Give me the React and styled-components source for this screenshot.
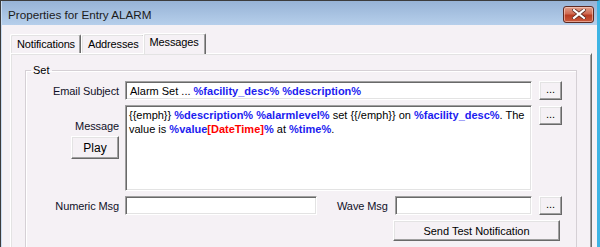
import React from 'react';
import styled, { createGlobalStyle } from 'styled-components';

const Global = createGlobalStyle`
  * { box-sizing: border-box; }
  html, body { margin: 0; padding: 0; background: #f5f1f5; }
  body { font-family: "Liberation Sans", Arial, sans-serif; font-size: 11px; color: #000; }
`;

const App = () => {
  return (
    <>
      <Global />
      <Window>
        <TitleBar>
          <Title>Properties for Entry ALARM</Title>
          <CloseButton>
            <svg width="14" height="10" viewBox="0 0 14 10">
              <path d="M2 1 L12 9 M12 1 L2 9" stroke="#5a2a20" strokeWidth="3.6" strokeLinecap="square" />
              <path d="M2 1 L12 9 M12 1 L2 9" stroke="#fff" strokeWidth="2.2" strokeLinecap="square" />
            </svg>
          </CloseButton>
        </TitleBar>
        <Body>
          <TabStrip>
            <Tab>Notifications</Tab>
            <Tab>Addresses</Tab>
            <Tab active>Messages</Tab>
          </TabStrip>
          <TabPanel>
            <GroupBox>
              <Legend>Set</Legend>
              <FormGrid>
                <Label>Email Subject</Label>
                <Field>
                  Alarm Set ... <Var>%facility_desc%</Var> <Var>%description%</Var>
                </Field>
                <Button small>...</Button>

                <MessageSide>
                  <Label>Message</Label>
                  <Button play>Play</Button>
                </MessageSide>
                <TextArea>
                  {'{{emph}} '}<Var>%description%</Var> <Var>%alarmlevel%</Var>{' set {{/emph}} on '}
                  <Var>%facility_desc%</Var>. The
                  <br />
                  value is <Var>%value</Var><Red>[DateTime]</Red><Var>%</Var> at <Var>%time%</Var>.
                </TextArea>
                <Button small top>...</Button>

                <Label>Numeric Msg</Label>
                <SplitRow>
                  <Field w={192} />
                  <WaveLabel>Wave Msg</WaveLabel>
                  <Field w={137} />
                </SplitRow>
                <Button small>...</Button>

                <span />
                <SendCell>
                  <Button wide>Send Test Notification</Button>
                </SendCell>
              </FormGrid>
            </GroupBox>
          </TabPanel>
        </Body>
      </Window>
    </>
  );
};

export default App;

const Window = styled.div`
  width: 600px;
  height: 247px;
  overflow: hidden;
  background: #f5f1f5;
  border-top: 1px solid #3c3c3c;
  border-left: 1px solid #3c3c3c;
  border-right: 3px solid #3eb4e4;
  display: flex;
  flex-direction: column;
`;

const TitleBar = styled.div`
  height: 24px;
  flex: none;
  display: flex;
  align-items: center;
  justify-content: space-between;
  padding: 0 2px 0 6px;
  background: linear-gradient(#97b3d6, #b6cfeb);
  border-left: 1px solid #c9dcf2;
`;

const Title = styled.div`
  font-size: 11.7px;
  color: #1b1b1b;
  padding-top: 3px;
`;

const CloseButton = styled.div`
  width: 31px;
  height: 17px;
  margin-top: 2px;
  margin-right: 1px;
  border: 1px solid #5e2a22;
  border-radius: 3px;
  background: linear-gradient(#e0a08c 0%, #cf6a52 45%, #b83c22 55%, #c95a3c 100%);
  box-shadow: inset 0 0 0 1px rgba(255, 220, 210, 0.55);
  display: flex;
  align-items: center;
  justify-content: center;
`;

const Body = styled.div`
  flex: 1;
  padding: 7px 6px 0 8px;
  border-left: 1px solid #c9dcf2;
`;

const TabStrip = styled.div`
  display: flex;
  align-items: flex-end;
  height: 21px;
  position: relative;
  z-index: 1;
`;

const Tab = styled.div`
  height: ${p => (p.active ? '21px' : '19px')};
  padding: ${p => (p.active ? '2px 6px 0 6px' : '3px 5px 0 6px')};
  margin: ${p => (p.active ? '0 -1px 0 -2px' : '0')};
  background: #f5f1f5;
  border-top: 1px solid #fff;
  border-left: 1px solid #fff;
  border-right: 1px solid #696969;
  box-shadow: inset -1px 0 #a0a0a0, inset 1px 1px #e3e3e3;
  margin-bottom: ${p => (p.active ? '-1px' : '0')};
  border-radius: 2px 2px 0 0;
  white-space: nowrap;
  letter-spacing: -0.15px;
`;

const TabPanel = styled.div`
  height: 200px;
  width: 582px;
  border-top: 1px solid #fff;
  border-left: 1px solid #fff;
  border-right: 1px solid #696969;
  box-shadow: inset 1px 1px #e3e3e3, inset -1px 0 #a0a0a0;
  padding: 10px 14px 0 14px;
`;

const GroupBox = styled.fieldset`
  margin: 0;
  padding: 4px 0 0 0;
  height: 190px;
  border: 1px solid #d5d0d5;
  border-bottom: none;
  box-shadow: inset 1px 1px #fff;
`;

const Legend = styled.legend`
  padding: 0 2px;
  margin-left: 5px;
  font-size: 11px;
  line-height: 13px;
`;

const FormGrid = styled.div`
  display: grid;
  grid-template-columns: 93px 407px 22px;
  column-gap: 6px;
  row-gap: 5px;
  align-items: center;
  grid-template-rows: 19px 86px 19px 22px;
  & > :nth-child(3n) {
    margin-left: 1px;
  }
`;

const Label = styled.div`
  text-align: right;
  white-space: nowrap;
  color: #101028;
  letter-spacing: -0.1px;
`;

const WaveLabel = styled(Label)`
  margin: 0 7px 0 20px;
`;

const sunken = `
  background: #fff;
  border-top: 1px solid #a0a0a0;
  border-left: 1px solid #a0a0a0;
  border-bottom: 1px solid #fff;
  border-right: 1px solid #fff;
  box-shadow: inset 1px 1px #696969, inset -1px -1px #e3e3e3;
`;

const Field = styled.div`
  ${sunken}
  height: 19px;
  width: ${p => (p.w ? `${p.w}px` : 'auto')};
  padding: 3px 3px 0 4px;
  line-height: 13px;
  white-space: nowrap;
  overflow: hidden;
`;

const TextArea = styled.div`
  ${sunken}
  height: 86px;
  padding: 2px 3px 0 3px;
  line-height: 14px;
  white-space: nowrap;
  overflow: hidden;
`;

const Var = styled.b`
  color: #1c1cf0;
  font-weight: bold;
`;

const Red = styled.b`
  color: #ff0000;
  font-weight: bold;
`;

const MessageSide = styled.div`
  align-self: start;
  display: flex;
  flex-direction: column;
  align-items: flex-end;
  padding-top: 15px;
  gap: 4px;
`;

const SplitRow = styled.div`
  display: flex;
  align-items: center;
`;

const SendCell = styled.div`
  grid-column: 2 / 4;
  display: flex;
  justify-content: flex-end;
  align-self: start;
  margin-left: 0 !important;
`;

const Button = styled.div`
  background: #f5f1f5;
  border-top: 1px solid #fff;
  border-left: 1px solid #fff;
  border-bottom: 1px solid #696969;
  border-right: 1px solid #696969;
  box-shadow: inset -1px -1px #a0a0a0, inset 1px 1px #e3e3e3;
  display: flex;
  align-items: center;
  justify-content: center;
  white-space: nowrap;
  height: ${p => (p.play ? '23px' : p.wide ? '21px' : '19px')};
  width: ${p => (p.play ? '48px' : p.wide ? '167px' : '23px')};
  align-self: ${p => (p.top ? 'start' : 'auto')};
  margin-top: ${p => (p.top ? '1px' : '0')};
  font-size: ${p => (p.play ? '12px' : '11px')};
  padding-bottom: ${p => (p.small ? '3px' : '0')};
`;
